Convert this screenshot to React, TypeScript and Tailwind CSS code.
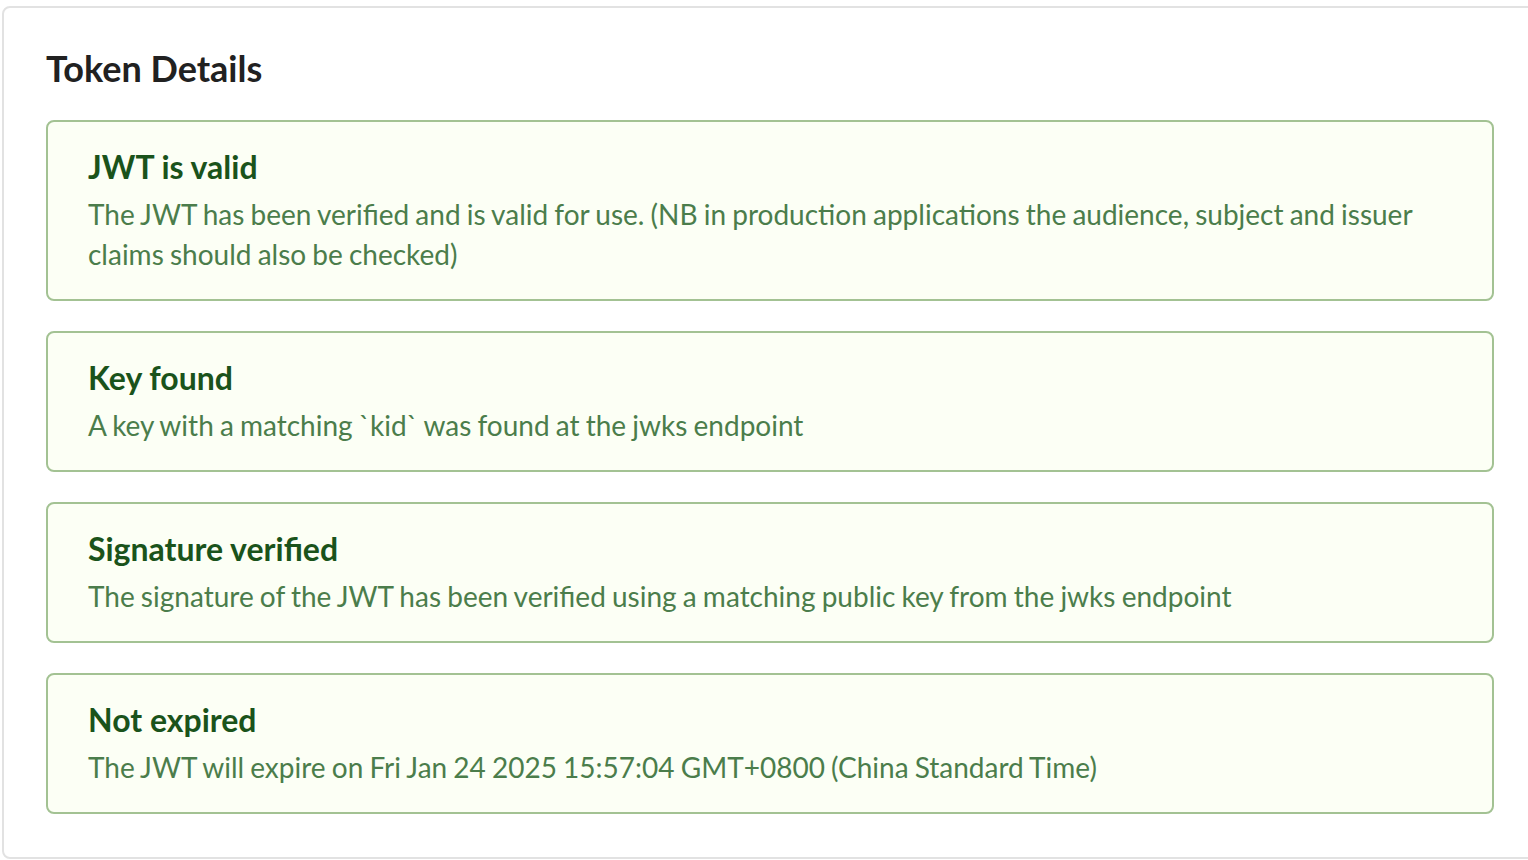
const checks = [
  {
    title: "JWT is valid",
    text: "The JWT has been verified and is valid for use. (NB in production applications the audience, subject and issuer claims should also be checked)",
  },
  {
    title: "Key found",
    text: "A key with a matching `kid` was found at the jwks endpoint",
  },
  {
    title: "Signature verified",
    text: "The signature of the JWT has been verified using a matching public key from the jwks endpoint",
  },
  {
    title: "Not expired",
    text: "The JWT will expire on Fri Jan 24 2025 15:57:04 GMT+0800 (China Standard Time)",
  },
];

function CheckMessage({ title, text }: { title: string; text: string }) {
  return (
    <div className="bg-[#fcfff5] border-2 border-[#a3c293] rounded-[8px] px-[40px] pt-[24px] pb-[25px]">
      <div className="text-[32px] leading-[41px] font-bold text-[#1a531b]">
        {title}
      </div>
      <p className="mt-[7px] text-[28px] leading-[40px] text-[#4b7d4b] [word-spacing:-1px]">
        {text}
      </p>
    </div>
  );
}

export default function App() {
  return (
    <div
      className="w-[1528px] h-[860px] overflow-hidden bg-white"
      style={{ fontFamily: "Lato, 'Open Sans', 'Liberation Sans', sans-serif" }}
    >
      <section className="mt-[6px] ml-[2px] w-[1540px] border-2 border-[#e2e2e2] rounded-[8px] pl-[42px] pr-[42px] pt-[37px] pb-[43px]">
        <h3 className="text-[36px] leading-[46px] font-bold text-[#212121]">
          Token Details
        </h3>
        <div className="mt-[29px] w-[1448px] flex flex-col gap-[30px]">
          {checks.map((check) => (
            <CheckMessage key={check.title} title={check.title} text={check.text} />
          ))}
        </div>
      </section>
    </div>
  );
}
